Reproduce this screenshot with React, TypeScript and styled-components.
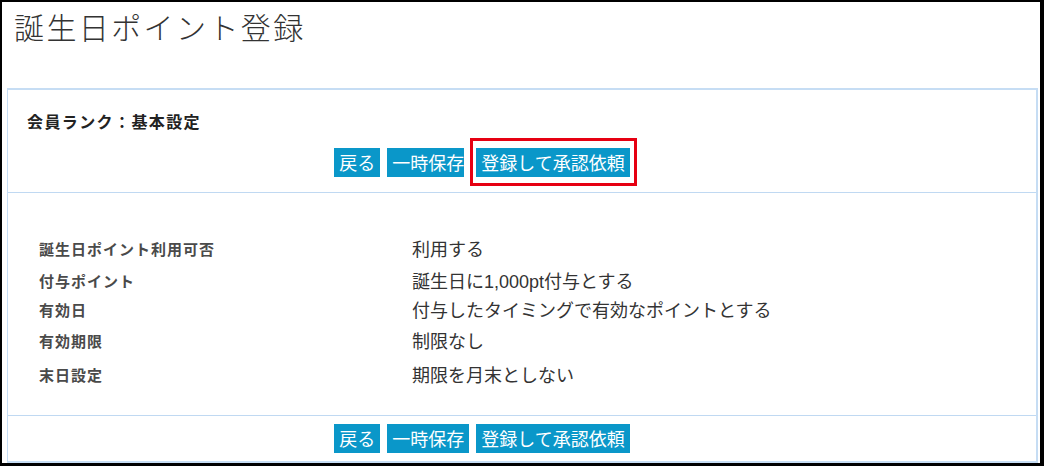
import React from "react";
import styled, { createGlobalStyle } from "styled-components";

const GlobalStyle = createGlobalStyle`
  html, body {
    margin: 0;
    padding: 0;
    background: #ffffff;
  }
  body {
    font-family: "Noto Sans CJK JP", "Liberation Sans", sans-serif;
    color: #333333;
  }
  * {
    box-sizing: border-box;
  }
`;

const Frame = styled.div`
  width: 1044px;
  height: 466px;
  border-style: solid;
  border-color: #000000;
  border-width: 2px 4px 3px 2px;
  padding: 4px 2px 0 5px;
  display: flex;
  flex-direction: column;
  background: #ffffff;
  overflow: hidden;
`;

const PageTitle = styled.h1`
  margin: 0 0 42px 7px;
  font-size: 30px;
  line-height: 40px;
  font-weight: 300;
  letter-spacing: 2.4px;
  color: #333333;
`;

const Panel = styled.section`
  flex: 1;
  display: flex;
  flex-direction: column;
  border: 2px solid #c6ddf4;
  border-left-width: 1px;
`;

const PanelHeader = styled.header`
  padding: 21px 0 15px 0;
  display: flex;
  flex-direction: column;
  gap: 17px;
`;

const SectionTitle = styled.h2`
  margin: 0 0 0 19px;
  font-size: 16px;
  line-height: 20px;
  font-weight: 700;
  letter-spacing: 1.4px;
  color: #222222;
`;

const ButtonBar = styled.div`
  display: flex;
  justify-content: center;
  gap: 7px;
  padding-right: 80px;
`;

const ActionButton = styled.button`
  height: 29px;
  padding: 0 5px;
  border: none;
  border-radius: 0;
  background: #0a97c9;
  color: #ffffff;
  font-family: "Noto Sans CJK JP", "Liberation Sans", sans-serif;
  font-size: 18px;
  line-height: 29px;
  white-space: nowrap;
  cursor: pointer;
`;

/* red frame drawn over the primary button */
const Highlight = styled.span`
  position: relative;
  display: inline-flex;

  &::after {
    content: "";
    position: absolute;
    top: -10px;
    right: -7px;
    bottom: -9px;
    left: -6px;
    border: 3px solid #e60012;
    box-shadow: 0 0 0 6px #ffffff;
    pointer-events: none;
  }
`;

const DetailBody = styled.div`
  border-top: 1px solid #c0d9f2;
  padding: 39px 0 25px 31px;
  display: flex;
  flex-direction: column;
`;

const DetailRow = styled.div<{ $h: number }>`
  display: grid;
  grid-template-columns: 373px 1fr;
  align-items: center;
  height: ${(p) => p.$h}px;
`;

const Label = styled.div`
  font-size: 15px;
  font-weight: 700;
  letter-spacing: 1px;
  color: #4a4a4a;
  white-space: nowrap;
`;

const Value = styled.div`
  font-family: "Liberation Sans", "Noto Sans CJK JP", sans-serif;
  font-size: 18px;
  color: #333333;
  white-space: nowrap;
`;

const PanelFooter = styled.footer`
  border-top: 1px solid #c0d9f2;
  padding: 8px 0 8px 0;
`;

const rows = [
  { label: "誕生日ポイント利用可否", value: "利用する", h: 32 },
  { label: "付与ポイント", value: "誕生日に1,000pt付与とする", h: 32 },
  { label: "有効日", value: "付与したタイミングで有効なポイントとする", h: 26 },
  { label: "有効期限", value: "制限なし", h: 36 },
  { label: "末日設定", value: "期限を月末としない", h: 32 },
];

function Actions({ highlight }: { highlight?: boolean }) {
  const submit = <ActionButton type="button">登録して承認依頼</ActionButton>;
  return (
    <ButtonBar>
      <ActionButton type="button">戻る</ActionButton>
      <ActionButton type="button">一時保存</ActionButton>
      {highlight ? <Highlight>{submit}</Highlight> : submit}
    </ButtonBar>
  );
}

export default function App() {
  return (
    <>
      <GlobalStyle />
      <Frame>
        <PageTitle>誕生日ポイント登録</PageTitle>
        <Panel>
          <PanelHeader>
            <SectionTitle>会員ランク：基本設定</SectionTitle>
            <Actions highlight />
          </PanelHeader>
          <DetailBody>
            {rows.map((r) => (
              <DetailRow key={r.label} $h={r.h}>
                <Label>{r.label}</Label>
                <Value>{r.value}</Value>
              </DetailRow>
            ))}
          </DetailBody>
          <PanelFooter>
            <Actions />
          </PanelFooter>
        </Panel>
      </Frame>
    </>
  );
}
